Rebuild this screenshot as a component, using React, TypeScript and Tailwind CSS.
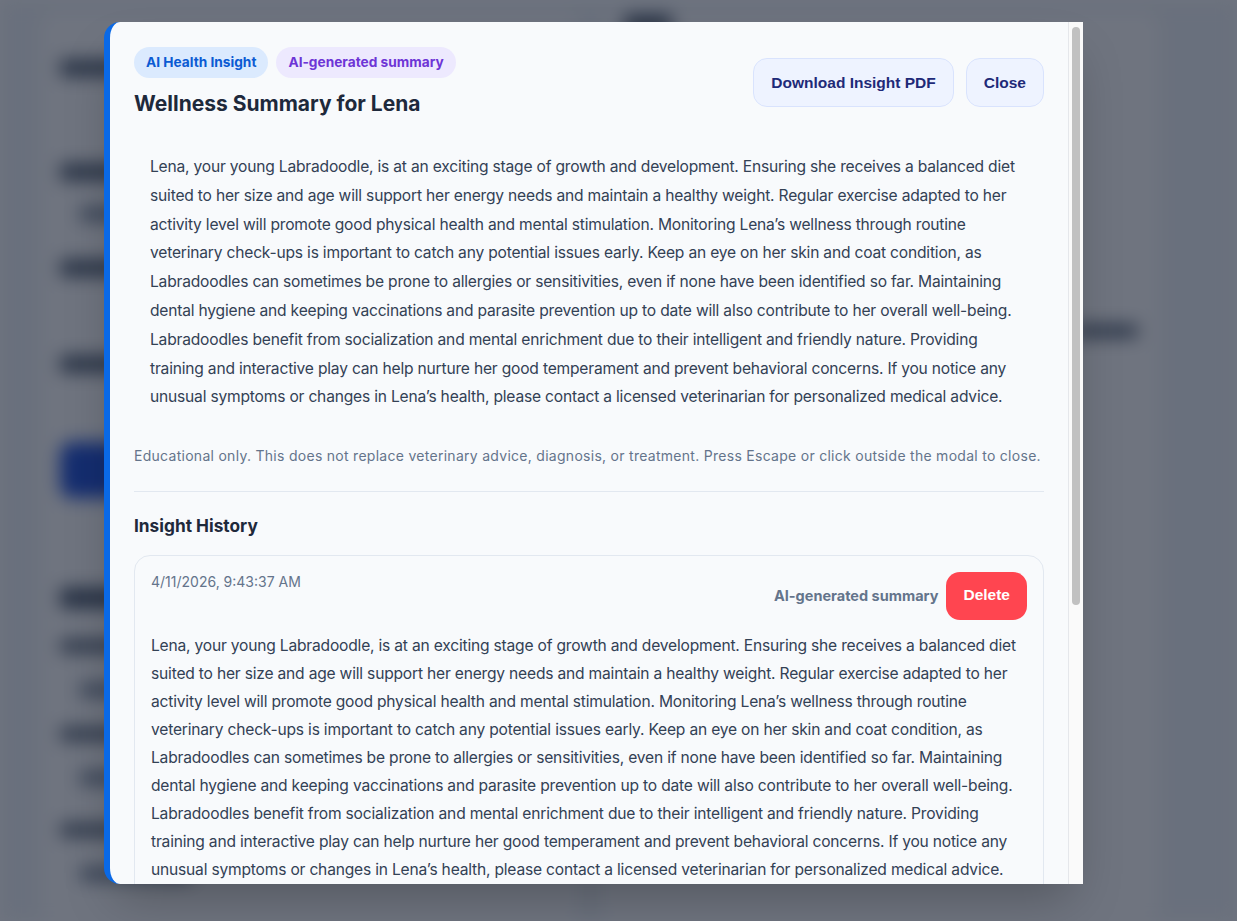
import React from "react";

const SUMMARY =
  "Lena, your young Labradoodle, is at an exciting stage of growth and development. Ensuring she receives a balanced diet suited to her size and age will support her energy needs and maintain a healthy weight. Regular exercise adapted to her activity level will promote good physical health and mental stimulation. Monitoring Lena\u2019s wellness through routine veterinary check-ups is important to catch any potential issues early. Keep an eye on her skin and coat condition, as Labradoodles can sometimes be prone to allergies or sensitivities, even if none have been identified so far. Maintaining dental hygiene and keeping vaccinations and parasite prevention up to date will also contribute to her overall well-being. Labradoodles benefit from socialization and mental enrichment due to their intelligent and friendly nature. Providing training and interactive play can help nurture her good temperament and prevent behavioral concerns. If you notice any unusual symptoms or changes in Lena\u2019s health, please contact a licensed veterinarian for personalized medical advice.";

const history = [
  { date: "4/11/2026, 9:43:37 AM", text: SUMMARY },
  { date: "4/10/2026, 6:12:05 PM", text: SUMMARY },
];

function BackgroundPage() {
  return (
    <div className="flex h-[921px] gap-5 bg-[#f1f5f9] pl-10 pt-3 blur-[9px]" aria-hidden>
      <div className="flex w-[540px] flex-col rounded-2xl bg-white px-5 pt-12">
        <div className="h-4 w-28 rounded bg-[#475569]" />
        <div className="mt-[88px] h-4 w-32 rounded bg-[#475569]" />
        <div className="ml-5 mt-7 h-3 w-24 rounded bg-[#64748b]" />
        <div className="mt-10 h-4 w-36 rounded bg-[#475569]" />
        <div className="mt-20 h-4 w-32 rounded bg-[#475569]" />
        <div className="mt-[70px] h-[56px] w-[480px] rounded-xl bg-[#1d4ed8]" />
        <div className="mt-[90px] h-5 w-40 rounded bg-[#475569]" />
        <div className="mt-8 h-3 w-20 rounded bg-[#475569]" />
        <div className="ml-5 mt-8 h-3 w-28 rounded bg-[#64748b]" />
        <div className="mt-8 h-3 w-20 rounded bg-[#475569]" />
        <div className="ml-5 mt-8 h-3 w-28 rounded bg-[#64748b]" />
        <div className="mt-10 h-3 w-20 rounded bg-[#475569]" />
        <div className="ml-5 mt-8 h-3 w-28 rounded bg-[#64748b]" />
      </div>
      <div className="flex w-[560px] flex-col rounded-2xl bg-white px-6 pt-1">
        <div className="h-4 w-12 rounded bg-[#334155]" />
        <div className="mt-5 h-3 w-44 rounded bg-[#cbd5e1]" />
        <div className="mt-4 h-3 w-40 rounded bg-[#cbd5e1]" />
        <div className="mt-4 h-3 w-36 rounded bg-[#cbd5e1]" />
        <div className="ml-[450px] mt-[205px] h-3 w-16 rounded bg-[#475569]" />
        <div className="ml-[360px] mt-[420px] h-6 w-6 rounded-full bg-[#475569]" />
      </div>
    </div>
  );
}

export default function App() {
  return (
    <div className="relative h-[921px] w-full overflow-hidden font-['Inter','Noto_Sans',sans-serif]">
      <BackgroundPage />
      <div className="absolute inset-0 bg-[#0f172a]/60 pl-[104px] pt-[22px]">
        <div className="flex h-[862px] w-[979px] overflow-hidden rounded-l-2xl border-l-[6px] border-l-[#0a69e6] bg-[#f8fafc] shadow-2xl">
          <div className="min-w-0 flex-1 overflow-y-auto rounded-tr-md">
            <div className="px-6 pb-6 pt-[25px]">
              <div className="flex items-center justify-between">
                <div>
                  <div className="flex gap-2">
                    <span className="rounded-full bg-[#dbeafe] px-3 py-[7px] text-[13.7px] font-bold leading-[17px] text-[#0b5bd3]">
                      AI Health Insight
                    </span>
                    <span className="rounded-full bg-[#ede9fe] px-3 py-[7px] text-[13.7px] font-bold leading-[17px] text-[#6d35d6]">
                      AI-generated summary
                    </span>
                  </div>
                  <h2 className="mt-3 text-[21px] font-bold leading-7 text-[#1e293b]">
                    Wellness Summary for Lena
                  </h2>
                </div>
                <div className="flex gap-3 font-['Liberation_Sans',Arial,sans-serif]">
                  <button className="h-[49px] rounded-[14px] border border-[#d9e3fd] bg-[#eef3ff] px-[17px] text-[15.5px] font-bold text-[#1e2a78]">
                    Download Insight PDF
                  </button>
                  <button className="h-[49px] rounded-[14px] border border-[#d9e3fd] bg-[#eef3ff] px-[17px] text-[15.5px] font-bold text-[#1e2a78]">
                    Close
                  </button>
                </div>
              </div>

              <div className="mt-[19px] p-4">
                <p className="text-[15.6px] leading-[28.8px] tracking-[-0.2px] text-[#334155]">{SUMMARY}</p>
              </div>

              <p className="mt-[18px] text-[14px] leading-5 tracking-[0.28px] text-[#64748b]">
                Educational only. This does not replace veterinary advice, diagnosis, or treatment. Press Escape or click outside the modal to close.
              </p>

              <div className="mt-[25px] border-t border-[#e2e8f0] pt-5">
                <h3 className="text-[17.3px] font-bold leading-7 text-[#1e293b]">Insight History</h3>
                <div className="mt-[15px] flex flex-col gap-4">
                  {history.map((h) => (
                    <div key={h.date} className="rounded-2xl border border-[#e2e8f0] bg-[#f8fafc] px-4 pb-4 pt-4">
                      <div className="flex items-start justify-between">
                        <span className="text-[14px] leading-5 text-[#64748b]">{h.date}</span>
                        <div className="flex items-center gap-2">
                          <span className="text-[14.5px] font-bold text-[#64748b]">AI-generated summary</span>
                          <button className="h-12 rounded-[14px] bg-[#ff4550] px-[17px] pb-[3px] font-['Liberation_Sans',Arial,sans-serif] text-[15.5px] font-bold text-white">
                            Delete
                          </button>
                        </div>
                      </div>
                      <p className="mt-3 text-[15.6px] leading-7 tracking-[-0.2px] text-[#334155]">{h.text}</p>
                    </div>
                  ))}
                </div>
              </div>
            </div>
          </div>
          <div className="flex w-[15px] shrink-0 justify-center border-l border-[#e5e7eb] bg-[#fafafa] pt-[5px]" aria-hidden>
            <div className="h-[578px] w-[8px] rounded-full bg-[#c1c1c1]" />
          </div>
        </div>
      </div>
    </div>
  );
}
